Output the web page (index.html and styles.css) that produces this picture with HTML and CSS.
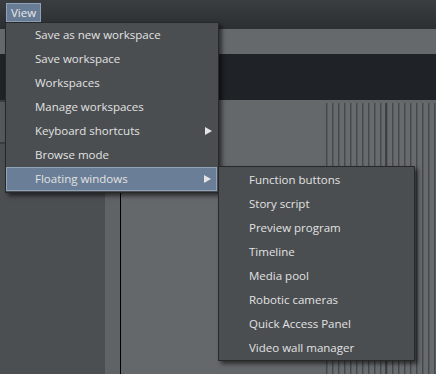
FILE: index.html
```html
<!DOCTYPE html>
<html lang="en">
<head>
    <meta charset="UTF-8">
    <title>View menu</title>
    <link rel="stylesheet" href="styles.css">
</head>
<body>
    <div class="app">
        <div class="menubar">
            <button class="menubar-item active">View</button>
        </div>
        <div class="toolbar"></div>
        <div class="preview"></div>
        <div class="workspace">
            <div class="sidebar">
                <div class="sidebar-header"></div>
            </div>
            <div class="splitter"></div>
            <div class="stage">
                <div class="stage-blank"></div>
                <div class="stage-stripes"></div>
            </div>
        </div>

        <ul class="menu main-menu">
            <li class="menu-item">Save as new workspace</li>
            <li class="menu-item">Save workspace</li>
            <li class="menu-item">Workspaces</li>
            <li class="menu-item">Manage workspaces</li>
            <li class="menu-item has-sub">Keyboard shortcuts</li>
            <li class="menu-item">Browse mode</li>
            <li class="menu-item has-sub selected">Floating windows</li>
        </ul>

        <ul class="menu sub-menu">
            <li class="menu-item">Function buttons</li>
            <li class="menu-item">Story script</li>
            <li class="menu-item">Preview program</li>
            <li class="menu-item">Timeline</li>
            <li class="menu-item">Media pool</li>
            <li class="menu-item">Robotic cameras</li>
            <li class="menu-item">Quick Access Panel</li>
            <li class="menu-item">Video wall manager</li>
        </ul>
    </div>
</body>
</html>
```

FILE: styles.css
```css
* {
    margin: 0;
    padding: 0;
    box-sizing: border-box;
}

body {
    width: 436px;
    height: 374px;
    overflow: hidden;
    background: #65686b;
    font-family: "Open Sans", "Noto Sans", sans-serif;
    font-size: 11.5px;
}

.app {
    position: relative;
    display: flex;
    flex-direction: column;
    height: 374px;
}

.menubar {
    height: 29px;
    padding: 3px 0 0 6px;
    background: linear-gradient(#3b3e41, #2c2f32);
}

.menubar-item {
    height: 19px;
    padding: 0 4px;
    font: inherit;
    line-height: 17px;
    color: #e8e8e8;
    background: #687c95;
    border: 1px solid #8fa2b7;
    vertical-align: top;
}

.toolbar {
    height: 25px;
    background: #65696c;
}

.preview {
    height: 46px;
    background: #1f2226;
}

.workspace {
    flex: 1;
    display: flex;
}

.sidebar {
    width: 105px;
    background: #4b4f52;
    border-top: 2px solid #3a3d40;
}

.sidebar-header {
    height: 42px;
    border-bottom: 2px solid #3a3d40;
    background: #54585b;
}

.splitter {
    width: 16px;
    background: #5f6366;
    border-right: 1px solid #000;
}

.stage {
    flex: 1;
    display: flex;
}

.stage-blank {
    width: 205px;
    background: #65686b;
}

.stage-stripes {
    flex: 1;
    margin-top: 3px;
    background:
        linear-gradient(90deg, transparent 59px, #3e4043 59px, #3e4043 61px, transparent 61px),
        repeating-linear-gradient(90deg,
            #46494c 0, #46494c 1px,
            #585b5e 1px, #585b5e 2px,
            #686b6e 2px, #686b6e 6px);
}

.menu {
    position: absolute;
    list-style: none;
    background: #4a4e51;
    border: 1px solid #26282a;
    box-shadow: 3px 3px 4px rgba(0, 0, 0, 0.55);
    color: #e2e2e2;
}

.main-menu {
    left: 5px;
    top: 22px;
    width: 214px;
}

.sub-menu {
    left: 218px;
    top: 166px;
    width: 197px;
    padding-top: 1px;
}

.menu-item {
    position: relative;
    height: 24px;
    line-height: 23px;
    padding-left: 29px;
    white-space: nowrap;
}

.sub-menu .menu-item {
    padding-left: 30px;
}

.menu-item.selected {
    background: #6a7e97;
    border: 1px solid #91a4b9;
    margin: 0 1px 1px 0;
    padding-left: 28px;
    line-height: 21px;
}

.menu-item.has-sub::after {
    content: "";
    position: absolute;
    right: 6px;
    top: 8px;
    border-left: 7px solid #e4e4e4;
    border-top: 4px solid transparent;
    border-bottom: 4px solid transparent;
}

.menu-item.selected::after {
    top: 7px;
    right: 5px;
}
```
